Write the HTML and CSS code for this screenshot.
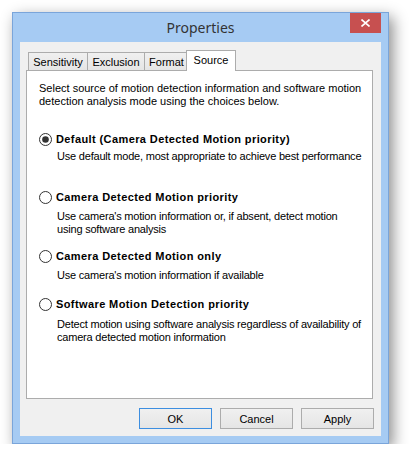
FILE: index.html
```html
<!DOCTYPE html>
<html lang="en">
<head>
    <meta charset="UTF-8">
    <title>Properties</title>
    <link rel="stylesheet" href="styles.css">
</head>
<body>
    <div class="window">
        <div class="titlebar">
            <span class="title">Properties</span>
            <button class="close" type="button" aria-label="Close">
                <svg width="9" height="8" viewBox="0 0 9 8"><path d="M0.5 0.5 L8.5 7.5 M8.5 0.5 L0.5 7.5" stroke="#fff" stroke-width="1.6"/></svg>
            </button>
        </div>

        <div class="client">
            <div class="tabs">
                <div class="tab tab-sens">Sensitivity</div>
                <div class="tab tab-excl">Exclusion</div>
                <div class="tab tab-format">Format</div>
                <div class="tab tab-source active">Source</div>
            </div>

            <div class="panel">
                <p class="intro">Select source of motion detection information and software motion<br>detection analysis mode using the choices below.</p>

                <div class="option opt-1">
                    <label class="radio-row">
                        <svg class="radio" width="13" height="13" viewBox="0 0 13 13"><circle cx="6.5" cy="6.5" r="6" fill="#fff" stroke="#333"/><circle cx="6.5" cy="6.5" r="3.3" fill="#333"/></svg>
                        <span>Default (Camera Detected Motion priority)</span>
                    </label>
                    <p class="desc">Use default mode, most appropriate to achieve best performance</p>
                </div>

                <div class="option opt-2">
                    <label class="radio-row">
                        <svg class="radio" width="13" height="13" viewBox="0 0 13 13"><circle cx="6.5" cy="6.5" r="6" fill="#fff" stroke="#333"/></svg>
                        <span>Camera Detected Motion priority</span>
                    </label>
                    <p class="desc">Use camera's motion information or, if absent, detect motion<br>using software analysis</p>
                </div>

                <div class="option opt-3">
                    <label class="radio-row">
                        <svg class="radio" width="13" height="13" viewBox="0 0 13 13"><circle cx="6.5" cy="6.5" r="6" fill="#fff" stroke="#333"/></svg>
                        <span>Camera Detected Motion only</span>
                    </label>
                    <p class="desc">Use camera's motion information if available</p>
                </div>

                <div class="option opt-4">
                    <label class="radio-row">
                        <svg class="radio" width="13" height="13" viewBox="0 0 13 13"><circle cx="6.5" cy="6.5" r="6" fill="#fff" stroke="#333"/></svg>
                        <span>Software Motion Detection priority</span>
                    </label>
                    <p class="desc">Detect motion using software analysis regardless of availability of<br>camera detected motion information</p>
                </div>
            </div>

            <div class="buttons">
                <button type="button" class="btn default">OK</button>
                <button type="button" class="btn">Cancel</button>
                <button type="button" class="btn">Apply</button>
            </div>
        </div>
    </div>
</body>
</html>
```

FILE: styles.css
```css
body {
    margin: 0;
    background-color: #ffffff;
    font-family: "Liberation Sans", Arial, sans-serif;
    font-size: 11px;
    color: #000;
}

.window {
    margin: 12px 0 0 12px;
    width: 377px;
    height: 432px;
    box-sizing: border-box;
    border: 1px solid #7aa5da;
    background-color: #a6cbf3;
    padding: 0 7px 7px;
    display: flex;
    flex-direction: column;
    box-shadow: 4px 5px 14px rgba(0, 0, 0, 0.45);
}

.titlebar {
    height: 29px;
    display: grid;
    grid-template-columns: 1fr auto 1fr;
}

.title {
    grid-column: 2;
    align-self: center;
    font-family: "Noto Sans", "Open Sans", sans-serif;
    font-size: 14px;
    color: #333;
}

.close {
    grid-column: 3;
    justify-self: end;
    align-self: start;
    width: 31px;
    height: 20px;
    padding: 0;
    border: none;
    background-color: #c75050;
    display: flex;
    align-items: center;
    justify-content: center;
}

.client {
    flex: 1;
    background-color: #f0f0f0;
    padding: 8px 8px 0 6px;
    display: flex;
    flex-direction: column;
}

.tabs {
    height: 20px;
    display: flex;
    align-items: flex-end;
    padding-left: 2px;
    position: relative;
    z-index: 1;
}

.tab {
    height: 18px;
    box-sizing: border-box;
    border: 1px solid #acacac;
    border-bottom: none;
    background: linear-gradient(#f0f0f0, #e5e5e5);
    display: flex;
    align-items: center;
    justify-content: center;
    margin-right: -1px;
}

.tab-sens { width: 60px; }
.tab-excl { width: 58px; }
.tab-format { width: 45px; }

.tab.active {
    width: 50px;
    height: 21px;
    margin: 0 0 -1px -2px;
    background: #ffffff;
    padding-bottom: 2px;
}

.panel {
    height: 329px;
    box-sizing: border-box;
    border: 1px solid #acacac;
    background-color: #ffffff;
    padding: 11px 0 0 12px;
    line-height: 13px;
    white-space: nowrap;
}

.panel p {
    margin: 0;
}

.radio-row {
    height: 16px;
    display: flex;
    align-items: center;
    gap: 4px;
    font-weight: bold;
    letter-spacing: 0.4px;
}

.desc {
    padding-left: 18px;
    letter-spacing: -0.2px;
}

.opt-1 { margin-top: 23px; }
.opt-1 .desc { margin-top: 3px; }
.opt-2 { margin-top: 26px; }
.opt-2 .desc { margin-top: 5px; }
.opt-3 { margin-top: 12px; }
.opt-3 .desc { margin-top: 5px; }
.opt-4 { margin-top: 14px; }
.opt-4 .desc { margin-top: 6px; }

.buttons {
    margin-top: 9px;
    margin-right: -1px;
    display: flex;
    justify-content: flex-end;
    gap: 8px;
}

.btn {
    width: 73px;
    height: 21px;
    box-sizing: border-box;
    border: 1px solid #acacac;
    background: linear-gradient(#f0f0f0, #e5e5e5);
    font-family: "Liberation Sans", Arial, sans-serif;
    font-size: 11px;
    color: #000;
    padding: 0;
}

.btn.default {
    border-color: #3d8ee0;
}
```
